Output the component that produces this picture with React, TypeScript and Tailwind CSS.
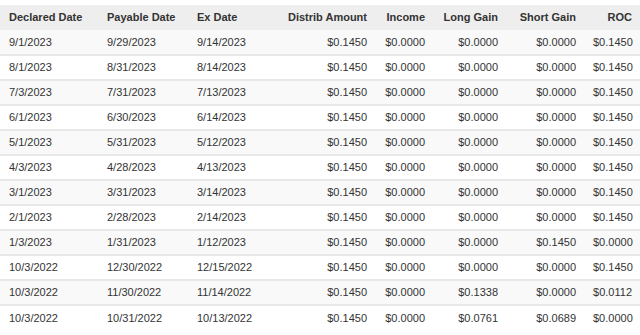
const rows: string[][] = [
  ["9/1/2023", "9/29/2023", "9/14/2023", "$0.1450", "$0.0000", "$0.0000", "$0.0000", "$0.1450"],
  ["8/1/2023", "8/31/2023", "8/14/2023", "$0.1450", "$0.0000", "$0.0000", "$0.0000", "$0.1450"],
  ["7/3/2023", "7/31/2023", "7/13/2023", "$0.1450", "$0.0000", "$0.0000", "$0.0000", "$0.1450"],
  ["6/1/2023", "6/30/2023", "6/14/2023", "$0.1450", "$0.0000", "$0.0000", "$0.0000", "$0.1450"],
  ["5/1/2023", "5/31/2023", "5/12/2023", "$0.1450", "$0.0000", "$0.0000", "$0.0000", "$0.1450"],
  ["4/3/2023", "4/28/2023", "4/13/2023", "$0.1450", "$0.0000", "$0.0000", "$0.0000", "$0.1450"],
  ["3/1/2023", "3/31/2023", "3/14/2023", "$0.1450", "$0.0000", "$0.0000", "$0.0000", "$0.1450"],
  ["2/1/2023", "2/28/2023", "2/14/2023", "$0.1450", "$0.0000", "$0.0000", "$0.0000", "$0.1450"],
  ["1/3/2023", "1/31/2023", "1/12/2023", "$0.1450", "$0.0000", "$0.0000", "$0.1450", "$0.0000"],
  ["10/3/2022", "12/30/2022", "12/15/2022", "$0.1450", "$0.0000", "$0.0000", "$0.0000", "$0.1450"],
  ["10/3/2022", "11/30/2022", "11/14/2022", "$0.1450", "$0.0000", "$0.1338", "$0.0000", "$0.0112"],
  ["10/3/2022", "10/31/2022", "10/13/2022", "$0.1450", "$0.0000", "$0.0761", "$0.0689", "$0.0000"],
];

const headers = [
  "Declared Date",
  "Payable Date",
  "Ex Date",
  "Distrib Amount",
  "Income",
  "Long Gain",
  "Short Gain",
  "ROC",
];

// column widths add up to the 640px viewport
const colWidths = ["w-[98px]", "w-[90px]", "w-[80px]", "w-[107px]", "w-[58px]", "w-[73px]", "w-[78px]", "w-[56px]"];

export default function App() {
  return (
    <div className="w-[640px] h-[335px] overflow-hidden bg-white pt-[5px] font-['Liberation_Sans',Arial,sans-serif] text-[11px] text-[#333333]">
      <table className="w-[640px] table-fixed border-collapse">
        <colgroup>
          {colWidths.map((w, i) => (
            <col key={i} className={w} />
          ))}
        </colgroup>
        <thead>
          <tr className="h-[25px] bg-[#eeeeee]">
            {headers.map((h, i) => (
              <th
                key={h}
                className={`pl-[9px] pr-[8px] font-bold whitespace-nowrap ${i < 3 ? "text-left" : "text-right"}`}
              >
                {h}
              </th>
            ))}
          </tr>
        </thead>
        <tbody>
          {rows.map((row, r) => (
            <tr
              key={r}
              className={`h-[25px] border-t-2 border-[#e8e8e8] first:border-t-0 ${r % 2 === 0 ? "bg-[#f9f9f9]" : "bg-white"}`}
            >
              {row.map((cell, c) => (
                <td
                  key={c}
                  className={`pl-[9px] pr-[8px] whitespace-nowrap ${c < 3 ? "text-left" : "text-right"}`}
                >
                  {cell}
                </td>
              ))}
            </tr>
          ))}
        </tbody>
      </table>
    </div>
  );
}
